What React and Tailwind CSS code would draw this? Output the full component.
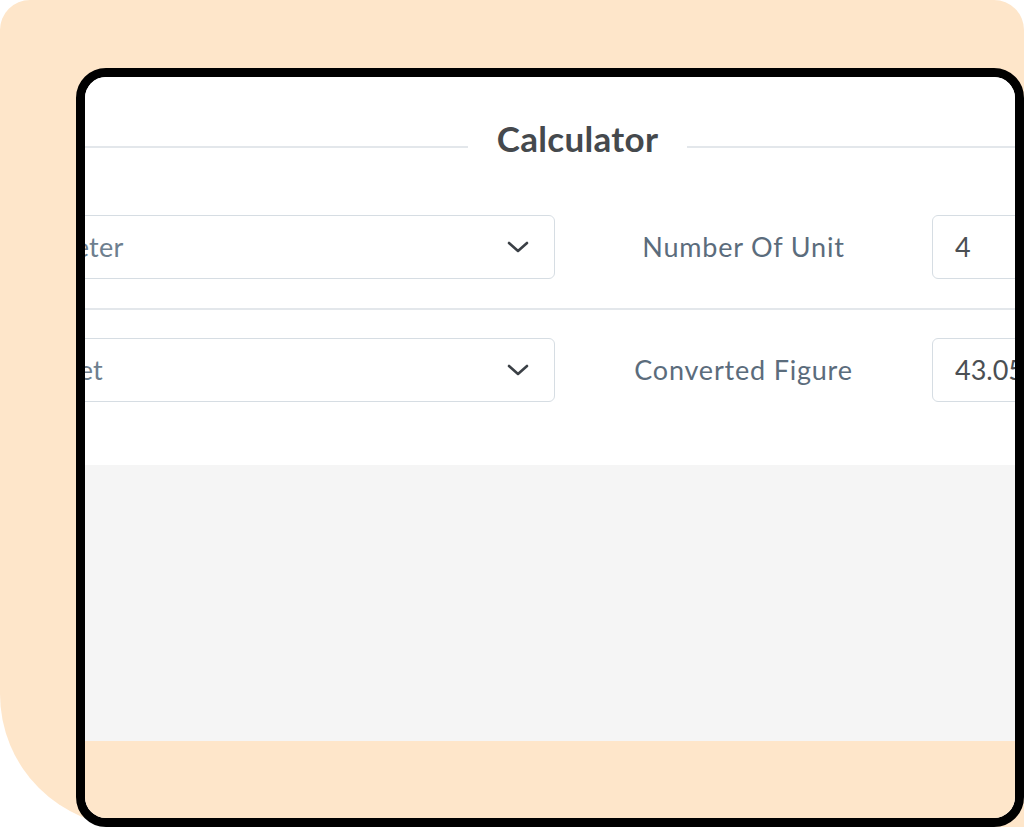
import React from 'react';

function Chevron() {
  return (
    <svg width="22" height="12" viewBox="0 0 22 12" fill="none" className="shrink-0">
      <path d="M2 2 L11 10 L20 2" stroke="#3b4046" strokeWidth="2.6" strokeLinecap="round" strokeLinejoin="round" />
    </svg>
  );
}

function Row({ unit, label, value }) {
  return (
    <div className="-ml-[140px] flex h-[64px] items-stretch">
      <div className="flex w-[610px] shrink-0 items-center justify-between rounded-[6px] border border-[#d6dde3] bg-white pl-[13px] pr-[25px]">
        <span className="text-[27px] tracking-[0.3px] text-[#6e7f8f]">{unit}</span>
        <Chevron />
      </div>
      <div className="flex w-[377px] shrink-0 items-center justify-center text-[27px] tracking-[0.8px] text-[#5b6c7c]">
        {label}
      </div>
      <div className="flex w-[400px] shrink-0 items-center rounded-[6px] border border-[#d6dde3] bg-white pl-[22px] text-[27px] text-[#4b4f53]">
        {value}
      </div>
    </div>
  );
}

export default function App() {
  return (
    <div className="h-[827px] w-[1024px] bg-white font-['Lato',_sans-serif]">
      <div className="h-[827px] rounded-tl-[30px] rounded-tr-[30px] rounded-bl-[133px] bg-[#fee6ca] pl-[76px] pt-[68px]">
        <div className="flex h-[759px] w-[948px] flex-col overflow-hidden rounded-[30px] border-[9px] border-black bg-white">
          {/* calculator panel */}
          <div className="h-[388px] shrink-0 bg-white pt-[36px]">
            <div className="flex h-[50px] w-[985px] items-start">
              <div className="mt-[33px] h-[2px] flex-1 bg-[#e3e7eb]"></div>
              <h2 className="mx-[29px] text-[35px] font-bold leading-[50px] tracking-[0.3px] text-[#45494d]">Calculator</h2>
              <div className="mt-[33px] h-[2px] flex-1 bg-[#e3e7eb]"></div>
            </div>

            <div className="mt-[52px]">
              <Row unit="Square Meter" label="Number Of Unit" value="4" />
              <div className="mt-[29px] h-[2px] w-full bg-[#e3e7eb]"></div>
              <div className="mt-[28px]">
                <Row unit="Square Feet" label="Converted Figure" value="43.0556" />
              </div>
            </div>
          </div>

          <div className="h-[276px] shrink-0 bg-[#f5f5f5]"></div>
          <div className="flex-1 bg-[#fee6ca]"></div>
        </div>
      </div>
    </div>
  );
}
